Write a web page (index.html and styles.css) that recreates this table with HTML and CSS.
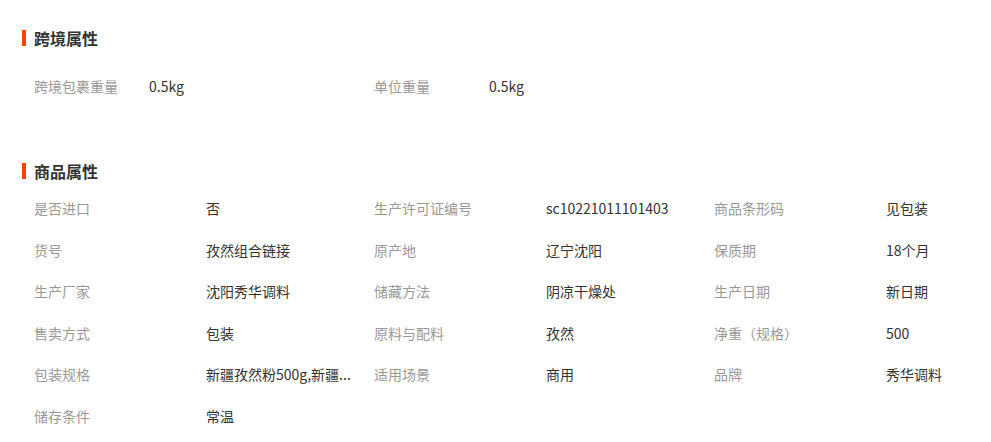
FILE: index.html
```html
<!DOCTYPE html>
<html lang="zh-CN">
<head>
  <meta charset="UTF-8">
  <meta name="viewport" content="width=device-width, initial-scale=1.0">
  <title>商品属性</title>
  <link rel="stylesheet" href="styles.css">
</head>
<body>
  <!-- 跨境属性 -->
  <div class="section section-cross">
    <h3 class="section-title">跨境属性</h3>
    <div class="attr-grid">
      <div class="attr-item"><span class="attr-name">跨境包裹重量</span><span class="attr-value">0.5kg</span></div>
      <div class="attr-item"><span class="attr-name">单位重量</span><span class="attr-value">0.5kg</span></div>
    </div>
  </div>

  <!-- 商品属性 -->
  <div class="section section-goods">
    <h3 class="section-title">商品属性</h3>
    <div class="attr-grid">
      <div class="attr-item"><span class="attr-name">是否进口</span><span class="attr-value">否</span></div>
      <div class="attr-item"><span class="attr-name">生产许可证编号</span><span class="attr-value">sc10221011101403</span></div>
      <div class="attr-item"><span class="attr-name">商品条形码</span><span class="attr-value">见包装</span></div>
      <div class="attr-item"><span class="attr-name">货号</span><span class="attr-value">孜然组合链接</span></div>
      <div class="attr-item"><span class="attr-name">原产地</span><span class="attr-value">辽宁沈阳</span></div>
      <div class="attr-item"><span class="attr-name">保质期</span><span class="attr-value">18个月</span></div>
      <div class="attr-item"><span class="attr-name">生产厂家</span><span class="attr-value">沈阳秀华调料</span></div>
      <div class="attr-item"><span class="attr-name">储藏方法</span><span class="attr-value">阴凉干燥处</span></div>
      <div class="attr-item"><span class="attr-name">生产日期</span><span class="attr-value">新日期</span></div>
      <div class="attr-item"><span class="attr-name">售卖方式</span><span class="attr-value">包装</span></div>
      <div class="attr-item"><span class="attr-name">原料与配料</span><span class="attr-value">孜然</span></div>
      <div class="attr-item"><span class="attr-name">净重（规格）</span><span class="attr-value">500</span></div>
      <div class="attr-item"><span class="attr-name">包装规格</span><span class="attr-value" title="新疆孜然粉500g,新疆孜然粒500g">新疆孜然粉500g,新疆...</span></div>
      <div class="attr-item"><span class="attr-name">适用场景</span><span class="attr-value">商用</span></div>
      <div class="attr-item"><span class="attr-name">品牌</span><span class="attr-value">秀华调料</span></div>
      <div class="attr-item"><span class="attr-name">储存条件</span><span class="attr-value">常温</span></div>
    </div>
  </div>
</body>
</html>
```

FILE: styles.css
```css
body {
  margin: 0;
  padding: 28px 0 0 22px;
  background: #fff;
  font-family: "Noto Sans CJK SC", "Noto Sans", sans-serif;
  font-size: 14px;
  color: #333;
}

.section-title {
  display: flex;
  align-items: center;
  margin: 0;
  height: 20px;
  font-size: 16px;
  font-weight: bold;
  color: #333;
}

/* 标题左侧橙色竖条 */
.section-title::before {
  content: "";
  width: 4px;
  height: 16px;
  margin-right: 8px;
  background: #ff4400;
}

.attr-grid {
  display: grid;
  grid-template-columns: 340px 340px 1fr;
  grid-auto-rows: 41.5px;
  align-items: center;
}

.section-cross .attr-grid {
  margin-top: 17px;
}

.section-goods {
  margin-top: 54px;
}

.section-goods .attr-grid {
  margin-top: 7px;
}

.attr-item {
  display: flex;
  min-width: 0;
  padding-left: 12px;
  line-height: 20px;
}

.attr-name {
  flex: none;
  width: 172px;
  color: #999;
}

.section-cross .attr-name {
  width: 115px;
}

.attr-value {
  max-width: 150px;
  overflow: hidden;
  white-space: nowrap;
  color: #333;
}
```
